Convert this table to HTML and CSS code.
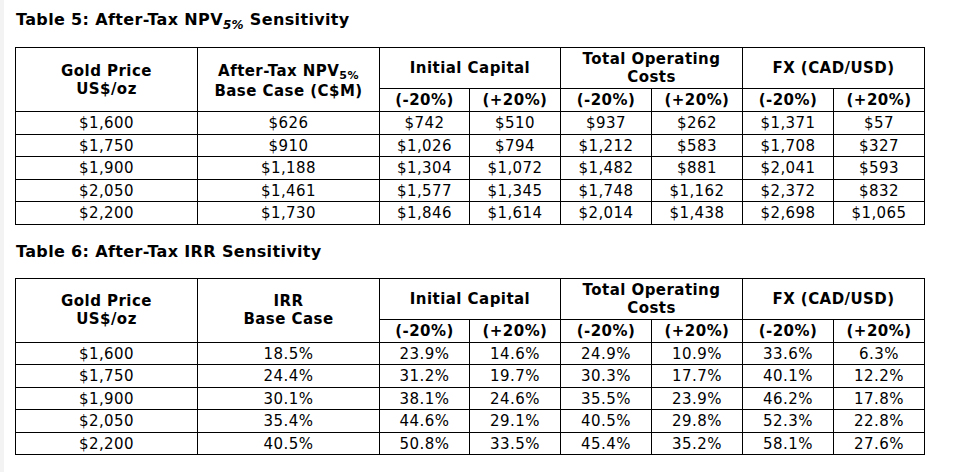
FILE: index.html
```html
<!DOCTYPE html>
<html>
<head>
<meta charset="utf-8">
<link rel="stylesheet" href="styles.css">
</head>
<body>
<div class="page">
  <p class="title">Table 5: After-Tax NPV<sub class="tsub">5%</sub> Sensitivity</p>
  <table class="sens">
    <colgroup>
      <col class="c-wide"><col class="c-wide"><col class="c-90"><col class="c-91"><col class="c-91"><col class="c-91"><col class="c-91"><col class="c-91">
    </colgroup>
    <thead>
      <tr>
        <th rowspan="2">Gold Price<br>US$/oz</th>
        <th rowspan="2" class="npv"><span class="npv-line">After-Tax NPV<sub class="hsub">5%</sub></span><br>Base Case (C$M)</th>
        <th colspan="2">Initial Capital</th>
        <th colspan="2">Total Operating<br>Costs</th>
        <th colspan="2">FX (CAD/USD)</th>
      </tr>
      <tr class="subhead">
        <th>(-20%)</th><th>(+20%)</th><th>(-20%)</th><th>(+20%)</th><th>(-20%)</th><th>(+20%)</th>
      </tr>
    </thead>
    <tbody>
      <tr><td>$1,600</td><td>$626</td><td>$742</td><td>$510</td><td>$937</td><td>$262</td><td>$1,371</td><td>$57</td></tr>
      <tr><td>$1,750</td><td>$910</td><td>$1,026</td><td>$794</td><td>$1,212</td><td>$583</td><td>$1,708</td><td>$327</td></tr>
      <tr><td>$1,900</td><td>$1,188</td><td>$1,304</td><td>$1,072</td><td>$1,482</td><td>$881</td><td>$2,041</td><td>$593</td></tr>
      <tr><td>$2,050</td><td>$1,461</td><td>$1,577</td><td>$1,345</td><td>$1,748</td><td>$1,162</td><td>$2,372</td><td>$832</td></tr>
      <tr><td>$2,200</td><td>$1,730</td><td>$1,846</td><td>$1,614</td><td>$2,014</td><td>$1,438</td><td>$2,698</td><td>$1,065</td></tr>
    </tbody>
  </table>

  <p class="title title-2">Table 6: After-Tax IRR Sensitivity</p>
  <table class="sens">
    <colgroup>
      <col class="c-wide"><col class="c-wide"><col class="c-90"><col class="c-91"><col class="c-91"><col class="c-91"><col class="c-91"><col class="c-91">
    </colgroup>
    <thead>
      <tr>
        <th rowspan="2">Gold Price<br>US$/oz</th>
        <th rowspan="2">IRR<br>Base Case</th>
        <th colspan="2">Initial Capital</th>
        <th colspan="2">Total Operating<br>Costs</th>
        <th colspan="2">FX (CAD/USD)</th>
      </tr>
      <tr class="subhead">
        <th>(-20%)</th><th>(+20%)</th><th>(-20%)</th><th>(+20%)</th><th>(-20%)</th><th>(+20%)</th>
      </tr>
    </thead>
    <tbody>
      <tr><td>$1,600</td><td>18.5%</td><td>23.9%</td><td>14.6%</td><td>24.9%</td><td>10.9%</td><td>33.6%</td><td>6.3%</td></tr>
      <tr><td>$1,750</td><td>24.4%</td><td>31.2%</td><td>19.7%</td><td>30.3%</td><td>17.7%</td><td>40.1%</td><td>12.2%</td></tr>
      <tr><td>$1,900</td><td>30.1%</td><td>38.1%</td><td>24.6%</td><td>35.5%</td><td>23.9%</td><td>46.2%</td><td>17.8%</td></tr>
      <tr><td>$2,050</td><td>35.4%</td><td>44.6%</td><td>29.1%</td><td>40.5%</td><td>29.8%</td><td>52.3%</td><td>22.8%</td></tr>
      <tr><td>$2,200</td><td>40.5%</td><td>50.8%</td><td>33.5%</td><td>45.4%</td><td>35.2%</td><td>58.1%</td><td>27.6%</td></tr>
    </tbody>
  </table>
</div>
</body>
</html>
```

FILE: styles.css
```css
html, body {
  margin: 0;
  padding: 0;
  background: #ffffff;
}
body {
  font-family: "DejaVu Sans", Verdana, sans-serif;
  color: #000000;
  height: 472px;
  border-left: 4px solid #f3f3f3;
  box-sizing: border-box;
}
.page {
  padding: 10px 0 0 11px;
}
.title {
  margin: 0 0 17px 1px;
  font-size: 16px;
  line-height: 20px;
  font-weight: bold;
  letter-spacing: 0.35px;
}
.title-2 {
  margin-top: 17px;
  margin-bottom: 16px;
}
.tsub {
  font-size: 12px;
  font-style: italic;
  line-height: 0;
  vertical-align: -4px;
}
.npv-line {
  display: inline-block;
  line-height: 22px;
}
.hsub {
  font-size: 11px;
  line-height: 0;
  vertical-align: -3px;
}
.sens {
  border-collapse: collapse;
  table-layout: fixed;
  width: 910px;
  font-size: 15px;
  letter-spacing: 0.45px;
}
.c-wide { width: 182px; }
.c-90 { width: 90px; }
.c-91 { width: 91px; }
.sens th, .sens td {
  border: 1px solid #000000;
  text-align: center;
  padding: 2px 0;
  line-height: 18px;
  white-space: nowrap;
}
.sens th {
  font-weight: bold;
  vertical-align: middle;
}
.sens td {
  padding: 2px 0 1.5px;
}
```
